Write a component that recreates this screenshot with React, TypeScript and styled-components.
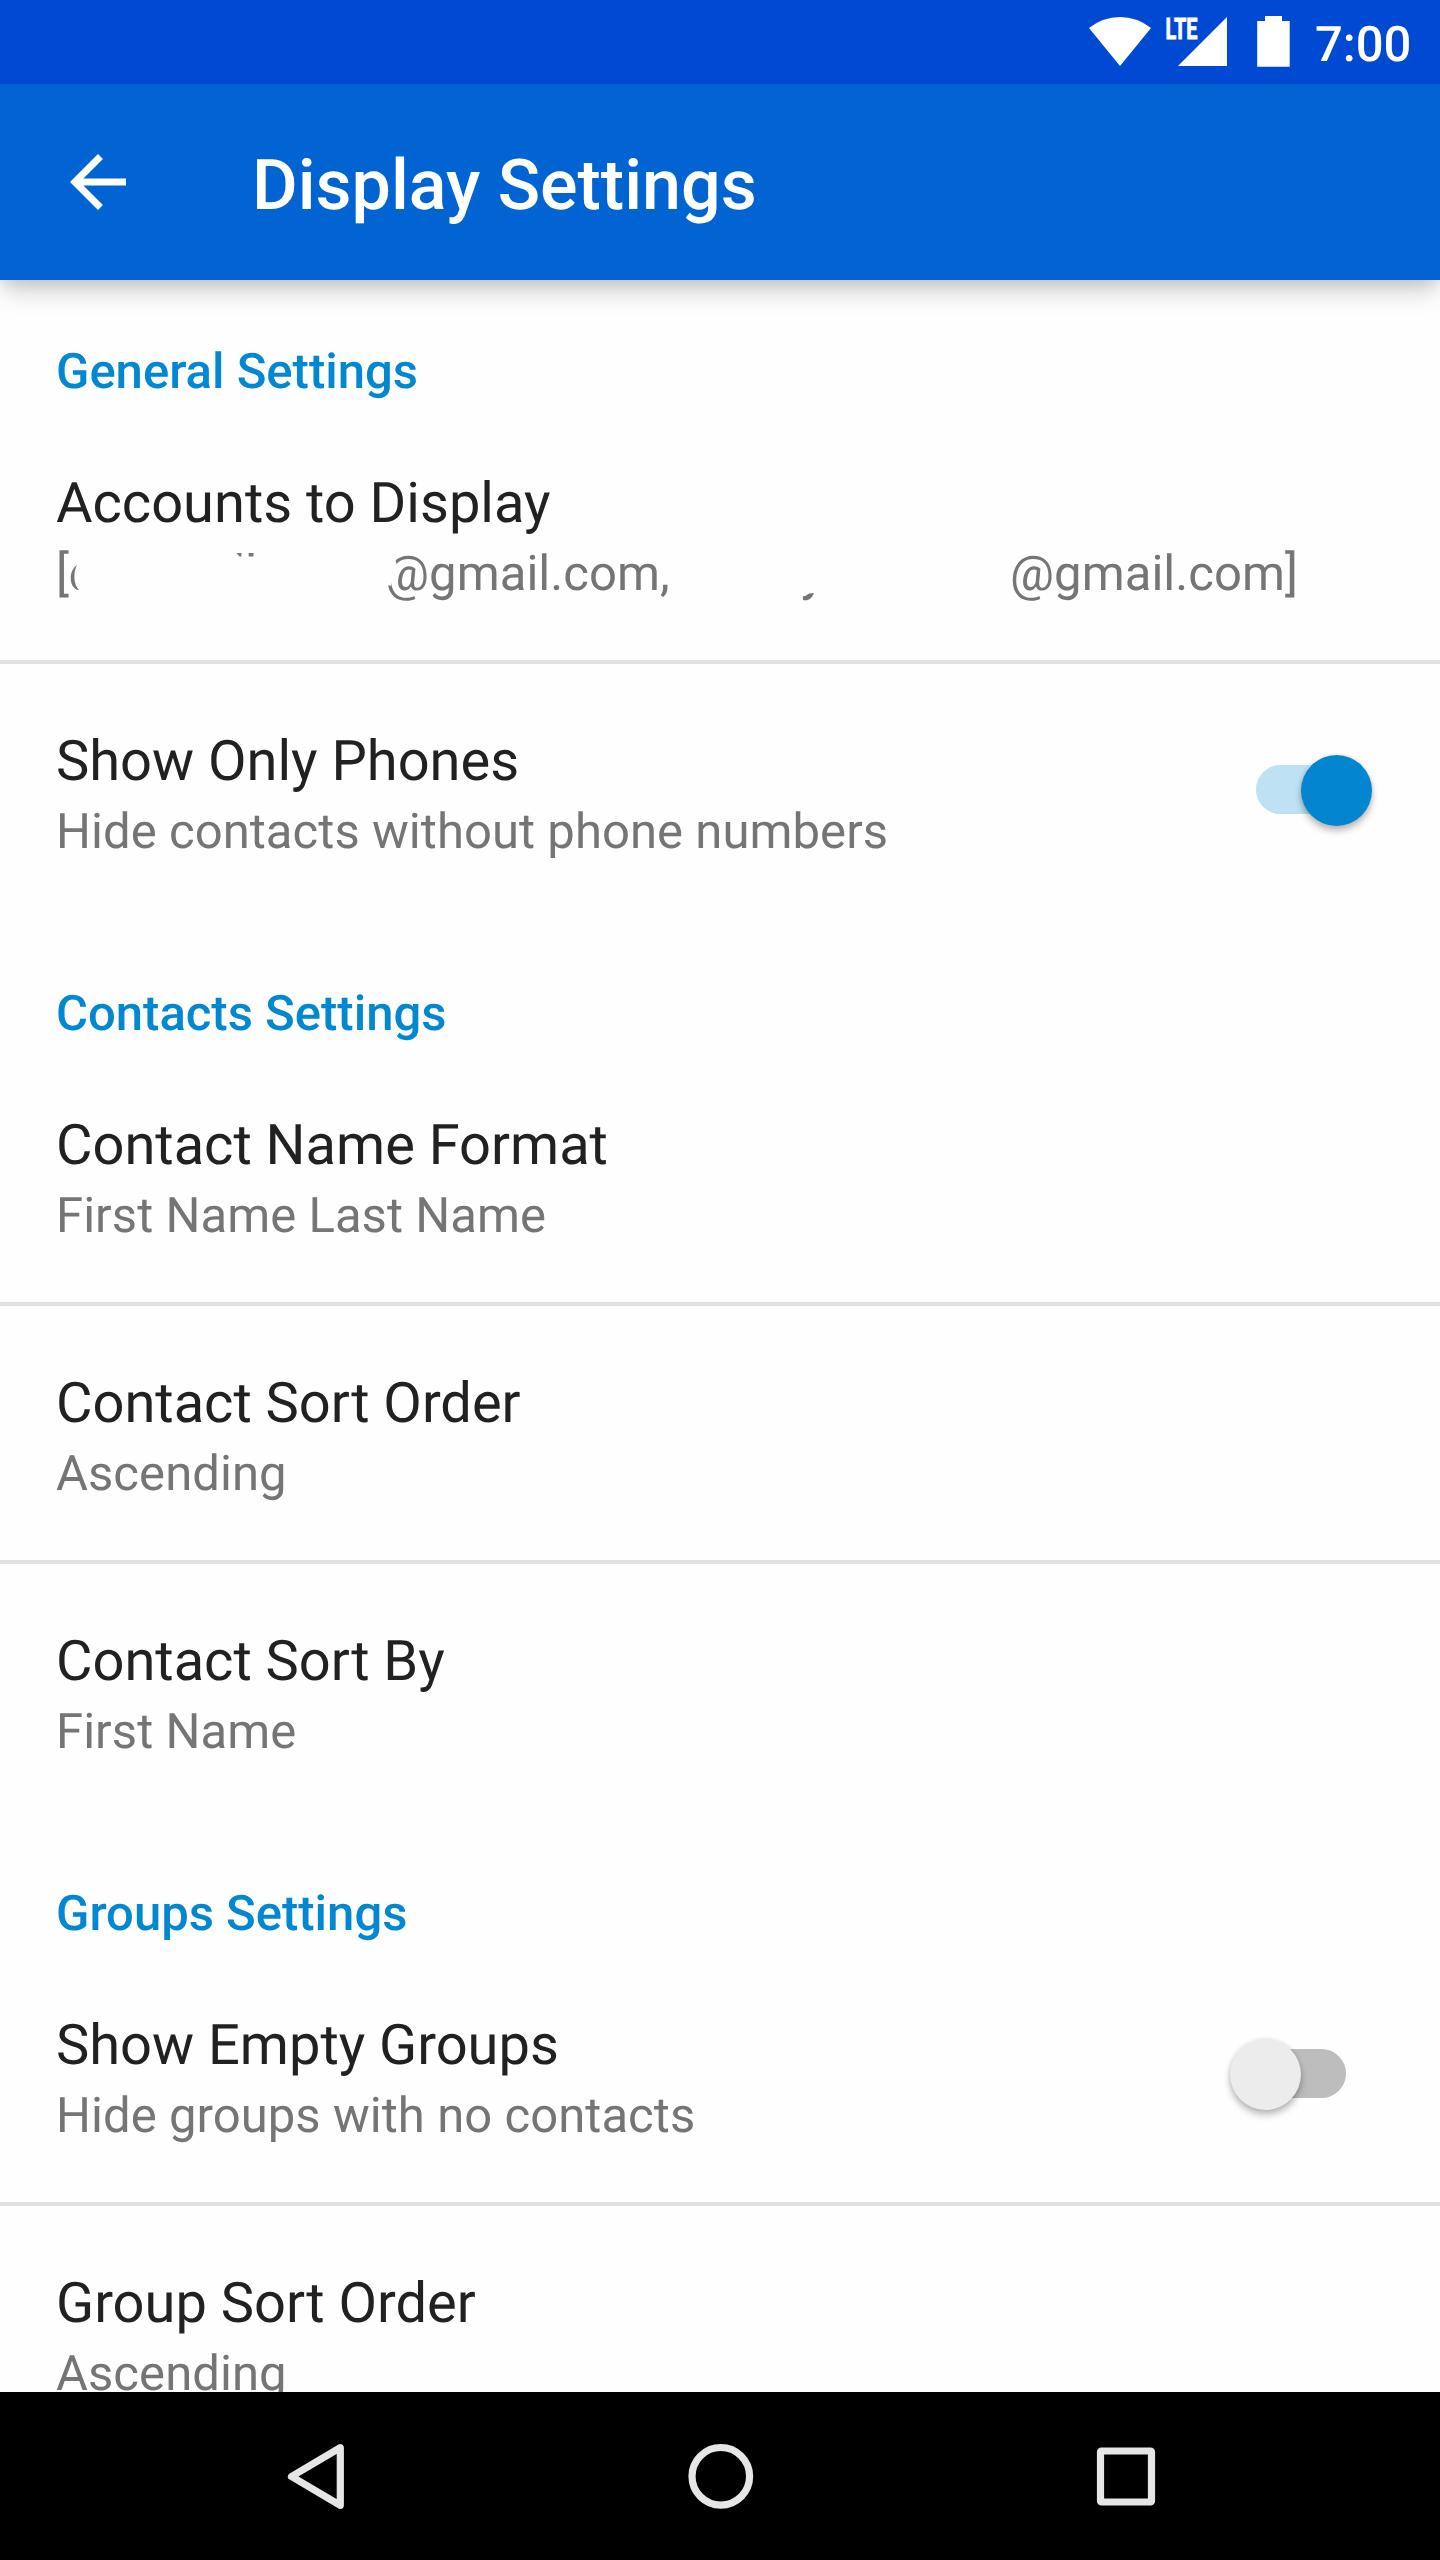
import React from 'react';
import styled, { createGlobalStyle } from 'styled-components';

const GlobalStyle = createGlobalStyle`
  body { margin: 0; background: #fefefe; }
  * { box-sizing: border-box; }
`;

const Screen = styled.div`
  display: flex;
  flex-direction: column;
  width: 1440px;
  height: 2560px;
  overflow: hidden;
  background: #fefefe;
  font-family: Roboto, 'Liberation Sans', sans-serif;
  text-rendering: geometricPrecision;
`;

const StatusBar = styled.header`
  display: flex;
  flex: none;
  justify-content: flex-end;
  height: 84px;
  padding-right: 27px;
  background: #004ad3;
  color: #fff;
`;

const StatusIcons = styled.svg`
  display: block;
  width: 231px;
  height: 84px;
  fill: #fff;
`;

const Clock = styled.time`
  width: 98px;
  padding-top: 16px;
  font-size: 49px;
  font-weight: 500;
  line-height: 57px;
`;

const Toolbar = styled.div`
  display: flex;
  flex: none;
  align-items: center;
  height: 196px;
  padding-left: 56px;
  background: #0164d2;
  color: #fff;
  box-shadow: 0 14px 24px -4px rgba(0, 0, 0, 0.2), 0 4px 12px rgba(0, 0, 0, 0.08);
  z-index: 1;
`;

const BackIcon = styled.svg`
  width: 84px;
  height: 84px;
  fill: #fff;
`;

const ToolbarTitle = styled.h1`
  margin: 8px 0 0 112px;
  font-size: 70px;
  font-weight: 500;
  line-height: 82px;
`;

const List = styled.main`
  flex: 1;
  min-height: 0;
  overflow: hidden;
`;

const SectionTitle = styled.h2`
  height: 126px;
  margin: 0;
  padding: 63px 56px 0;
  color: #0288d1;
  font-size: 49px;
  font-weight: 500;
  line-height: 58px;
`;

const Row = styled.div<{ $divided: boolean }>`
  display: flex;
  justify-content: space-between;
  height: 258px;
  padding: 62px 56px 0;
  border-bottom: 4px solid ${(p) => (p.$divided ? '#e0e0e0' : 'transparent')};
`;

const RowTitle = styled.div`
  padding-top: 2px;
  color: #212121;
  font-size: 56px;
  line-height: 66px;
`;

const Summary = styled.div`
  position: relative;
  display: flex;
  padding-top: 9px;
  color: #757575;
  font-size: 49px;
  letter-spacing: 0.06px;
  line-height: 58px;
  white-space: pre;
`;

const Track = styled.div<{ $on: boolean }>`
  width: 90px;
  height: 49px;
  margin: 39px 38px 0 0;
  border-radius: 25px;
  background: ${(p) => (p.$on ? '#bee1f4' : '#bdbdbd')};
`;

const Thumb = styled.div<{ $on: boolean }>`
  width: 71px;
  height: 71px;
  margin: -10px 0 0 ${(p) => (p.$on ? 45 : -26)}px;
  border-radius: 50%;
  background: ${(p) => (p.$on ? '#0385cf' : '#ececec')};
  box-shadow: 0 5px 7px rgba(0, 0, 0, 0.26), 0 0 5px rgba(0, 0, 0, 0.1);
`;

const NavBar = styled.nav`
  display: flex;
  flex: none;
  justify-content: center;
  height: 168px;
  background: #000;
`;

const NavIcon = styled.svg`
  width: 405px;
  height: 168px;
  fill: none;
  stroke: #e6e6e6;
  stroke-width: 7.2;
  stroke-linejoin: round;
`;

const Switch = ({ on }: { on: boolean }) => (
  <Track $on={on} role="switch" aria-checked={on}>
    <Thumb $on={on} />
  </Track>
);

type Item = { title: string; summary: React.ReactNode; on?: boolean };

const Setting = ({ item, divided }: { item: Item; divided: boolean }) => (
  <Row $divided={divided}>
    <div>
      <RowTitle>{item.title}</RowTitle>
      <Summary>{item.summary}</Summary>
    </div>
    {item.on !== undefined && <Switch on={item.on} />}
  </Row>
);

const Bracket = styled.span`
  flex: none;
  width: 329px;
`;

const FirstAddress = styled.span`
  flex: none;
  width: 625px;
`;

const Redaction = styled.svg`
  position: absolute;
  top: 0;
  left: 0;
  width: 800px;
  height: 76px;
  fill: #757575;
`;

const sections: { title: string; items: Item[] }[] = [
  {
    title: 'General Settings',
    items: [
      {
        title: 'Accounts to Display',
        summary: (
          <>
            <Bracket>[</Bracket>
            <FirstAddress>@gmail.com,</FirstAddress>
            <span>@gmail.com]</span>
            <Redaction viewBox="56 536 800 76">
              <path d="M384 556H394.5L396.5 564L391 586L384 584Z" fill="#fefefe" />
              <path d="M77 565C69 570 69 584 75 588.5Q77 590 79 590C73.5 585 73 572 77 565Z" />
              <path d="M236.5 553H241.3V556.5H239.5Z" />
              <path d="M248.7 553H253.5V556.5H248.7Z" />
              <path d="M803 596C806 597 807.5 594 809.5 593.5L814 593C811.5 599 808.5 601 803 600Z" />
            </Redaction>
          </>
        ),
      },
      { title: 'Show Only Phones', summary: 'Hide contacts without phone numbers', on: true },
    ],
  },
  {
    title: 'Contacts Settings',
    items: [
      { title: 'Contact Name Format', summary: 'First Name Last Name' },
      { title: 'Contact Sort Order', summary: 'Ascending' },
      { title: 'Contact Sort By', summary: 'First Name' },
    ],
  },
  {
    title: 'Groups Settings',
    items: [
      { title: 'Show Empty Groups', summary: 'Hide groups with no contacts', on: false },
      { title: 'Group Sort Order', summary: 'Ascending' },
    ],
  },
];

export default function App() {
  return (
    <Screen>
      <GlobalStyle />
      <StatusBar>
        <StatusIcons viewBox="1084 0 231 84">
          <path d="M1120 66 1089 28Q1103 17 1120 17T1151 28Z" />
          <path d="M1178 66H1227V17Z" />
          <text
            x="1165.5"
            y="39"
            fontSize="29.5"
            fontWeight="700"
            stroke="#fff"
            strokeWidth="0.9"
            textLength="32"
            lengthAdjust="spacingAndGlyphs"
          >
            LTE
          </text>
          <path d="M1265 16H1282V21H1289.7V66.7H1257.2V21H1265Z" />
        </StatusIcons>
        <Clock>7:00</Clock>
      </StatusBar>
      <Toolbar>
        <BackIcon viewBox="0 0 24 24">
          <path d="M20 11H7.83l5.59-5.59L12 4l-8 8 8 8 1.41-1.41L7.83 13H20v-2z" />
        </BackIcon>
        <ToolbarTitle>Display Settings</ToolbarTitle>
      </Toolbar>
      <List>
        {sections.map((s) => (
          <section key={s.title}>
            <SectionTitle>{s.title}</SectionTitle>
            {s.items.map((item, i) => (
              <Setting key={item.title} item={item} divided={i < s.items.length - 1} />
            ))}
          </section>
        ))}
      </List>
      <NavBar>
        <NavIcon viewBox="112.5 2392 405 168">
          <path d="M339.8 2447.7V2505.3L291 2476.5Z" />
        </NavIcon>
        <NavIcon viewBox="517.5 2392 405 168">
          <circle cx="720.3" cy="2476.3" r="28.8" />
        </NavIcon>
        <NavIcon viewBox="922.5 2392 405 168">
          <rect x="1100" y="2451" width="51" height="51" rx="1" />
        </NavIcon>
      </NavBar>
    </Screen>
  );
}
